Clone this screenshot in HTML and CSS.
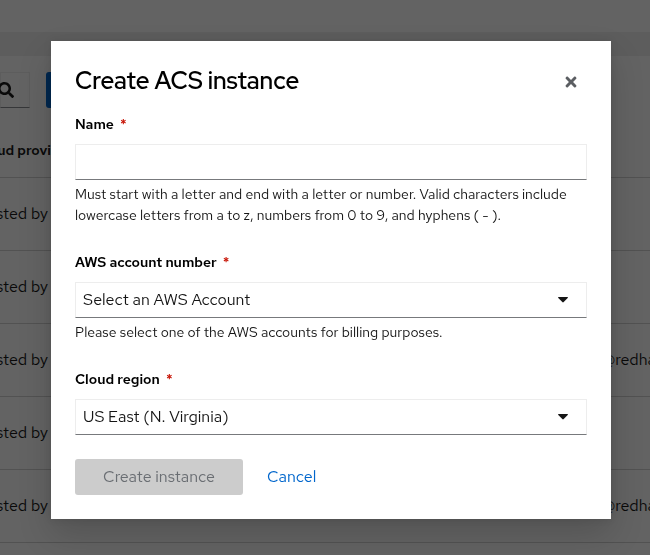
FILE: index.html
```html
<!DOCTYPE html>
<html lang="en">
<head>
<meta charset="utf-8">
<title>Create ACS instance</title>
<link rel="stylesheet" href="styles.css">
</head>
<body>
<div class="page">
  <header class="page-header"></header>
  <main class="page-main">
    <div class="toolbar">
      <div class="search">
        <svg class="search-icon" viewBox="0 0 512 512" aria-hidden="true"><path d="M505 442.7L405.3 343c-4.500-4.500-10.600-7-17-7H372c27.600-35.300 44-79.700 44-128C416 93.100 322.900 0 208 0S0 93.100 0 208s93.100 208 208 208c48.300 0 92.700-16.400 128-44v16.300c0 6.400 2.500 12.500 7 17l99.700 99.700c9.400 9.400 24.600 9.400 33.900 0l28.300-28.300c9.400-9.400 9.400-24.600.1-34zM208 336c-70.700 0-128-57.200-128-128 0-70.700 57.200-128 128-128 70.700 0 128 57.200 128 128 0 70.700-57.200 128-128 128z"/></svg>
      </div>
      <button class="toolbar-button" type="button" aria-label="Create"></button>
    </div>
    <table class="instances">
      <thead><tr><th>Cloud provider</th><th></th></tr></thead>
      <tbody>
        <tr><td>Hosted by</td><td></td></tr>
        <tr><td>Hosted by</td><td></td></tr>
        <tr><td>Hosted by</td><td>@redhat</td></tr>
        <tr><td>Hosted by</td><td></td></tr>
        <tr><td>Hosted by</td><td>@redhat</td></tr>
      </tbody>
    </table>
  </main>
</div>
<div class="backdrop">
  <section class="modal" role="dialog" aria-modal="true" aria-labelledby="title">
    <header class="modal-header">
      <h1 class="modal-title" id="title">Create ACS instance</h1>
      <button class="close" type="button" aria-label="Close">
        <svg class="close-icon" viewBox="0 0 352 512" aria-hidden="true"><path d="M242.720 256l100.070-100.070c12.280-12.280 12.280-32.190 0-44.480l-22.240-22.240c-12.280-12.280-32.190-12.280-44.480 0L176 189.280 75.930 89.210c-12.280-12.280-32.190-12.280-44.480 0L9.210 111.450c-12.280 12.280-12.280 32.190 0 44.480L109.280 256 9.210 356.070c-12.280 12.280-12.280 32.190 0 44.480l22.240 22.240c12.280 12.280 32.200 12.280 44.480 0L176 322.720l100.070 100.070c12.280 12.280 32.200 12.280 44.480 0l22.240-22.240c12.280-12.280 12.280-32.190 0-44.480L242.720 256z"/></svg>
      </button>
    </header>
    <form class="form">
      <div class="group">
        <label class="label" for="name">Name <span class="required">*</span></label>
        <input class="control" id="name" type="text" required aria-describedby="name-help">
        <p class="help" id="name-help">Must start with a letter and end with a letter or number. Valid characters include lowercase letters from a to z, numbers from 0 to 9, and hyphens ( - ).</p>
      </div>
      <div class="group">
        <label class="label" for="account">AWS account number <span class="required">*</span></label>
        <div class="select-wrap">
          <select class="control" id="account" aria-describedby="account-help"><option>Select an AWS Account</option></select>
          <svg class="caret" viewBox="0 0 10 6" aria-hidden="true"><path d="M.6 0h8.800q.9.200.3 1L5.700 5.100q-.7.600-1.400 0L.3 1Q-.3.200.6 0z"/></svg>
        </div>
        <p class="help" id="account-help">Please select one of the AWS accounts for billing purposes.</p>
      </div>
      <div class="group">
        <label class="label" for="region">Cloud region <span class="required">*</span></label>
        <div class="select-wrap">
          <select class="control" id="region"><option>US East (N. Virginia)</option></select>
          <svg class="caret" viewBox="0 0 10 6" aria-hidden="true"><path d="M.6 0h8.800q.9.200.3 1L5.700 5.100q-.7.600-1.400 0L.3 1Q-.3.200.6 0z"/></svg>
        </div>
      </div>
      <footer class="actions">
        <button class="submit" type="submit" disabled>Create instance</button>
        <button class="cancel" type="button">Cancel</button>
      </footer>
    </form>
  </section>
</div>
</body>
</html>
```
FILE: styles.css
```css
* { box-sizing: border-box; }
body {
  margin: 0;
  color: #151515;
  font-family: "Red Hat Text", Lato, "Liberation Sans", sans-serif;
  font-size: 16px;
  overflow: hidden;
}
button, input, select { font: inherit; }

.page { min-height: 100vh; background: #fff; overflow: hidden; }
.page-header { height: 32px; }
.page-main {
  border-top: 24px solid #f0f0f0;
  padding-top: 16px;
}
.toolbar { display: flex; gap: 16px; height: 36px; }
.search {
  display: flex;
  align-items: center;
  justify-content: flex-end;
  width: 30px;
  padding-right: 15px;
  border: 1px solid #f0f0f0;
  border-bottom-color: #8a8d90;
}
.search-icon { flex: none; width: 16px; height: 16px; fill: #151515; }
.toolbar-button { width: 160px; border: 0; border-radius: 3px; background: #06c; }
.instances {
  width: calc(100% + 25px);
  margin-left: -25px;
  border-collapse: collapse;
  table-layout: fixed;
}
.instances tr { border-bottom: 1px solid #d2d2d2; }
.instances th { height: 69px; padding: 15px 0 0; font-size: 14px; font-weight: 600; text-align: left; }
.instances td { height: 73px; padding: 0; white-space: nowrap; }
.instances th:last-child { width: 47px; }

.backdrop {
  position: fixed;
  inset: 0;
  display: flex;
  align-items: center;
  justify-content: center;
  padding: 41px 39px 36px 51px;
  background: rgba(3, 3, 3, .62);
}
.modal {
  width: 100%;
  max-width: 560px;
  padding: 24px;
  background: #fff;
  box-shadow: 0 16px 32px rgba(3, 3, 3, .16), 0 0 8px rgba(3, 3, 3, .1);
}
.modal-header {
  display: flex;
  align-items: center;
  justify-content: space-between;
  margin-bottom: 17px;
}
.modal-title {
  margin: 0;
  color: #000;
  font-family: "Red Hat Display", "Red Hat Text", Lato, "Liberation Sans", sans-serif;
  font-size: 24px;
  font-weight: 600;
  line-height: 32px;
}
.close {
  display: flex;
  align-items: center;
  justify-content: center;
  width: 32px;
  height: 32px;
  padding: 2px 0 0;
  border: 0;
  background: none;
}
.close-icon { width: 12px; height: 16px; fill: #5b5e62; }
.form { display: flex; flex-direction: column; gap: 26px; }
.label { display: block; margin-bottom: 9px; color: #000; font-size: 14px; font-weight: 600; line-height: 21px; }
.required { margin-left: 3px; color: #c9190b; }
.control {
  display: block;
  width: 100%;
  height: 36px;
  padding: 0 7px 2px;
  border: 1px solid #ededed;
  border-bottom-color: #77797c;
  border-radius: 0;
  background: #fff;
  color: #151515;
  appearance: none;
}
.select-wrap { position: relative; }
.caret { position: absolute; top: 15px; right: 19px; width: 10px; height: 6px; fill: #151515; pointer-events: none; }
.help { margin: 4px 0 0; font-size: 14px; line-height: 21px; }
.actions { display: flex; gap: 24px; margin-top: -2px; }
.submit, .cancel { height: 36px; padding: 0 0 2px; border: 0; }
.submit { width: 168px; border-radius: 3px; background: #ccc; color: #6a6e73; }
.cancel { background: none; color: #06c; }
```
